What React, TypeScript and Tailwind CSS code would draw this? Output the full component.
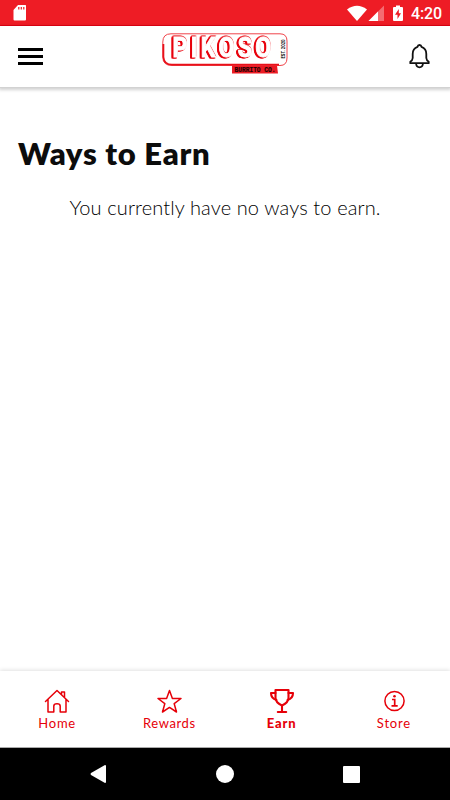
import React from "react";

const Logo = () => (
  <svg className="overflow-visible" width="128" height="42" viewBox="0 0 128 42" aria-label="Pikoso Burrito Co.">
    <path
      d="M9 .8H118Q125 .8 125 8V25Q125 32.500 118 32.500H10Q.8 32.500 .8 24V9Q.8 .8 9 .8Z"
      fill="#fff"
      stroke="#f0444a"
      strokeWidth="1"
    />
    <path d="M1.400 11V24Q2 31.700 10 31.700H117" fill="none" stroke="#e8101a" strokeWidth="1.800" />
    <text
      x="10.500"
      y="23.800"
      textLength="102"
      lengthAdjust="spacingAndGlyphs"
      className="font-['Roboto',sans-serif] text-[28px] font-bold tracking-[4px] [filter:drop-shadow(-1px_0.5px_0_#e8000b)_drop-shadow(-1px_1px_0_#e8000b)_drop-shadow(0.5px_-0.3px_0_#f04a50)]"
      fill="#fff"
      stroke="#fff"
      strokeWidth="1"
    >
      PIKOSO
    </text>
    <path d="M70 32.500H115L116 40.500H70Z" fill="#ec1b24" />
    <text x="72.500" y="39.200" textLength="41" lengthAdjust="spacingAndGlyphs" className="font-['Liberation_Mono',monospace] text-[8px] font-bold" fill="#240000" stroke="#240000" strokeWidth="0.200">
      BURRITO CO.
    </text>
    <text transform="translate(122.700 25.500) rotate(-90)" textLength="19" lengthAdjust="spacingAndGlyphs" className="font-['Roboto',sans-serif] text-[5px] font-bold" fill="#111">
      EST. 2020
    </text>
  </svg>
);

const StatusBar = () => (
  <div className="flex h-[26px] shrink-0 items-center border-b border-[#e60012] bg-[#ee1c25] text-white">
    <svg className="ml-[13px] mt-px" width="14" height="18" viewBox="0 0 14 18">
      <path d="M5 1H12.500Q13 1 13 2V15.500Q13 16.500 12 16.500H1.500Q.5 16.500 .5 15.500V6Z" fill="#fff" />
      <path d="M5.800 3V5.500M8.300 3V5.500M10.800 3V5.500" stroke="#ee1c25" strokeWidth="1.200" />
    </svg>
    <div className="ml-auto flex items-center">
      <svg className="mt-0.5" width="20" height="17" viewBox="0 0 20 17">
        <path d="M0 4.500Q10-3 20 4.500L10 16Z" fill="#fff" />
      </svg>
      <svg className="ml-px mt-0.5" width="16" height="17" viewBox="0 0 16 17">
        <path d="M16 .5V16H.5Z" fill="#fff" opacity=".35" />
        <path d="M10 6.500V16H.5Z" fill="#fff" />
      </svg>
      <svg className="ml-[9px] mt-0.5" width="10" height="17" viewBox="0 0 10 17">
        <path d="M3 .5H7V2H9Q10 2 10 3V15Q10 16 9 16H1Q0 16 0 15V3Q0 2 1 2H3Z" fill="#fff" />
        <path d="M5.800 4L2 9.800H4.500V14L8 8.200H5.800Z" fill="#ee1c25" />
      </svg>
      <span className="ml-2 mr-2 mt-[3px] font-['Roboto',sans-serif] text-[16px] font-medium leading-5 tracking-[-0.1px]">
        4:20
      </span>
    </div>
  </div>
);

const Header = () => (
  <div className="grid h-[62px] shrink-0 grid-cols-[162px_1fr_auto] items-start border-b border-[#d2d2d2] bg-white shadow-[0_1px_3px_1px_rgba(0,0,0,0.18)]">
    <button className="ml-[18px] mt-[22px] flex w-[25px] flex-col gap-1">
      <span className="h-[3px] w-full bg-black" />
      <span className="h-[3px] w-full bg-black" />
      <span className="h-[3px] w-full bg-black" />
    </button>
    <div className="mt-[7px]">
      <Logo />
    </div>
    <svg className="mr-[18px] mt-[17px]" width="24" height="27" viewBox="0 0 24 27" fill="none" stroke="#111" strokeWidth="1.800" strokeLinejoin="round">
      <path d="M9.500 3.900Q9.800 2 11.500 2T13.500 3.900Q18.300 5.500 18.300 11V15Q18.500 17.400 20.700 18.700V20.200H2.300V18.700Q4.500 17.400 4.700 15V11Q4.700 5.500 9.500 3.900Z" />
      <path d="M8 20.500Q8.500 24.300 11.500 24.300T15 20.500" />
    </svg>
  </div>
);

const HomeIcon = () => (
  <svg width="26" height="26" viewBox="0 0 26 26" fill="none" stroke="#e60009" strokeWidth="1.500" strokeLinejoin="round" strokeLinecap="round">
    <path d="M1.500 13.500L13 2.500L24.500 13.500M4 11.500V24H9.800V18Q9.800 15.800 13 15.800T16.200 18V24H22V11.500M17.500 6.200V4H20.500V9" />
  </svg>
);

const StarIcon = () => (
  <svg width="26" height="26" viewBox="0 0 26 26" fill="none" stroke="#e60009" strokeWidth="1.500" strokeLinejoin="round">
    <path d="M13.500 2.500L16.400 10.500H25L18.200 15.700L20.500 24L13.500 19.400L6.500 24L8.800 15.700L2 10.500H10.600Z" />
  </svg>
);

const TrophyIcon = () => (
  <svg width="26" height="26" viewBox="0 0 26 26" fill="none" stroke="#e60009" strokeWidth="2.100" strokeLinejoin="round" strokeLinecap="round">
    <path d="M6.500 2H19.500V10Q19.500 14.500 13 17.500Q6.500 14.500 6.500 10ZM13 17.500V24M8.800 24H17.200" />
    <path d="M6.500 5H2Q2 10.500 7.500 12M19.500 5H24Q24 10.500 18.500 12" />
  </svg>
);

const InfoIcon = () => (
  <svg width="26" height="26" viewBox="0 0 26 26" fill="none" stroke="#e60009" strokeWidth="1.500">
    <circle cx="13.500" cy="13" r="9.600" />
    <path d="M11 11.500H13.700V17.800M10.500 17.800H16.700" strokeWidth="1.700" />
    <circle cx="13.500" cy="8.300" r="1.300" fill="#e60009" stroke="none" />
  </svg>
);

const tabs = [
  { title: "Home", icon: <HomeIcon />, style: "tracking-[0.75px]" },
  { title: "Rewards", icon: <StarIcon />, style: "tracking-[0.6px]" },
  { title: "Earn", icon: <TrophyIcon />, style: "font-black tracking-[0.9px]" },
  { title: "Store", icon: <InfoIcon />, style: "tracking-[0.8px]" },
];

const App = () => {
  return (
    <div className="flex h-[800px] w-[450px] flex-col overflow-hidden bg-white font-['Lato',sans-serif]">
      <StatusBar />
      <Header />
      <main className="flex-1">
        <h1 className="ml-[18px] mt-[45px] whitespace-nowrap text-[31px] font-extrabold leading-10 tracking-[0.7px] text-[#0c0c0c]">
          Ways to Earn
        </h1>
        <p className="mt-[14px] whitespace-nowrap text-center text-[20px] font-light leading-[40px] tracking-[0.12px] text-black">
          You currently have no ways to earn.
        </p>
      </main>

      {/* Bottom tabs */}
      <nav className="grid h-[77px] shrink-0 grid-cols-4 border-b border-[#aaa] pl-px shadow-[0_-1px_4px_rgba(0,0,0,0.12)]">
        {tabs.map((item) => (
          <div key={item.title} className="flex flex-col items-center pt-[17px] text-[#e60009]">
            {item.icon}
            <span className={`mt-px text-[13px] leading-[17px] ${item.style}`}>{item.title}</span>
          </div>
        ))}
      </nav>

      {/* Android buttons */}
      <div className="flex h-[52px] shrink-0 items-center justify-between bg-black px-[90px]">
        <svg width="16" height="18" viewBox="0 0 16 18">
          <path d="M15 0Q16 0 16 1V17Q16 18 15 18L1 10Q0 9 1 8Z" fill="#fff" />
        </svg>
        <span className="h-[18px] w-[18px] rounded-full bg-white" />
        <span className="h-[17px] w-[17px] rounded-[1px] bg-white" />
      </div>
    </div>
  );
};

export default App;
